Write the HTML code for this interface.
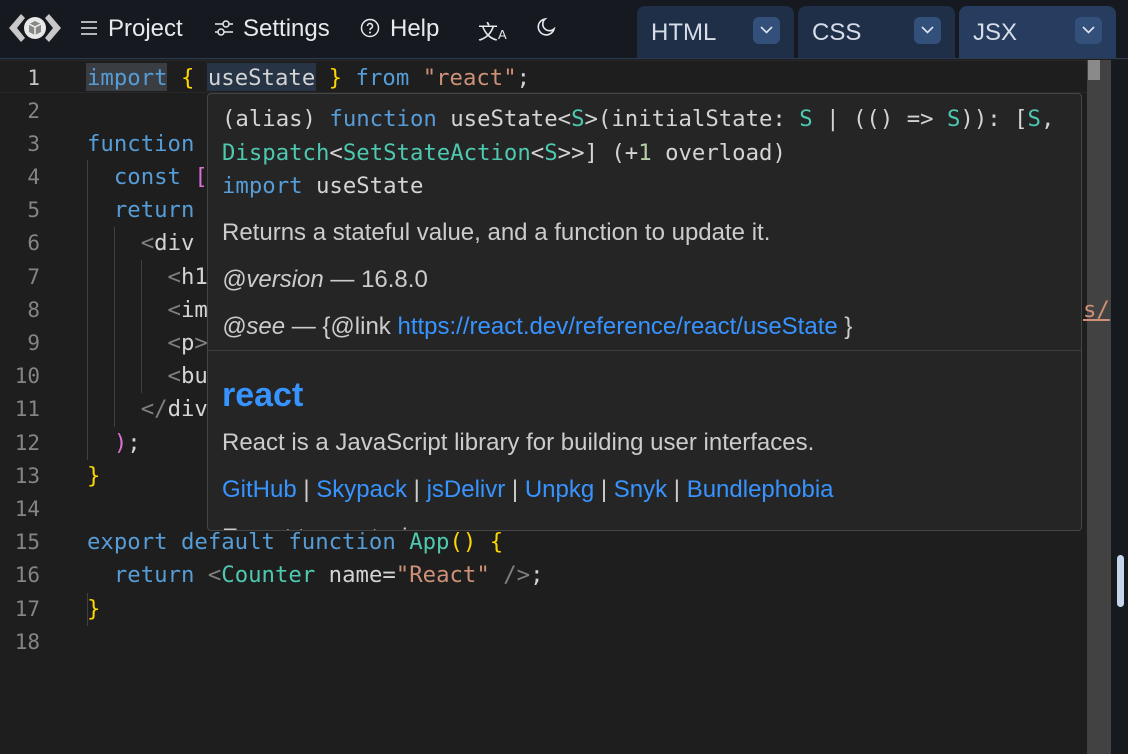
<!DOCTYPE html>
<html><head><meta charset="utf-8"><style>
*{margin:0;padding:0;box-sizing:border-box}
body{width:1128px;height:754px;overflow:hidden;background:#1e1e1e;font-family:"Liberation Sans",sans-serif;position:relative}
.hdr{position:absolute;left:0;top:0;width:1128px;height:59px;background:#161a20;border-bottom:1px solid #2a3b55}
.nav{position:absolute;top:15px;color:#e6e9ee;font-size:24px}
.tab{position:absolute;top:6px;height:52px;background:#1f2f47;border-radius:8px 8px 0 0;color:#d6dde8;font-size:24px;padding:13px 0 0 14px}
.tab.act{background:#263d5f}
.dd{position:absolute;right:14px;top:11px;width:27px;height:27px;background:#33507a;border-radius:6px}
.dd svg{position:absolute;left:7px;top:8px}
.ed{position:absolute;left:0;top:60px;width:1087px;height:694px;background:#1e1e1e}
.ln{position:absolute;left:0;width:40px;text-align:right;color:#858585;font-family:"DejaVu Sans Mono",monospace;font-size:21px}
.code{position:absolute;left:87px;white-space:pre;font-family:"DejaVu Sans Mono",monospace;font-size:22.3px;color:#d4d4d4}
.k{color:#569cd6}.s{color:#ce9178}.y{color:#ffd700}.p{color:#da70d6}.t{color:#4ec9b0}.g{color:#808080}.n{color:#b5cea8}
.guide{position:absolute;width:1px;background:#404040}
.tip{position:absolute;left:207px;top:93px;width:875px;height:438px;background:#252526;border:1px solid #454545;border-radius:4px;overflow:hidden}
.tc{position:absolute;left:14px;white-space:pre;font-family:"DejaVu Sans Mono",monospace;font-size:22.3px;color:#d4d4d4}
.tx{position:absolute;left:14px;white-space:nowrap;font-size:24px;color:#cccccc}
.a{color:#3794ff}
</style></head><body>
<div class="hdr">
 <svg style="position:absolute;left:7px;top:8px" width="56" height="40" viewBox="0 0 56 40"><path d="M2 20 L14 6 L18 10 L10 20 L18 30 L14 34Z M54 20 L42 6 L38 10 L46 20 L38 30 L42 34Z" fill="#c8c8c8"/><circle cx="28" cy="20" r="11" fill="#e8e8e8"/><path d="M22 16 L28 13 L34 16 L34 24 L28 27 L22 24Z" fill="#888"/><path d="M28 19 L28 27 M22 16 L28 19 L34 16" stroke="#eee" stroke-width="1.5" fill="none"/></svg>
 <svg style="position:absolute;left:79px;top:19px" width="20" height="18"><path d="M2 3H18M2 9H18M2 15H18" stroke="#e6e9ee" stroke-width="1.6"/></svg>
 <div class="nav" style="left:108px">Project</div>
 <svg style="position:absolute;left:213px;top:18px" width="22" height="20"><path d="M2 6H20M2 14H20" stroke="#e6e9ee" stroke-width="1.5"/><circle cx="13" cy="6" r="3" fill="#161a20" stroke="#e6e9ee" stroke-width="1.5"/><circle cx="8" cy="14" r="3" fill="#161a20" stroke="#e6e9ee" stroke-width="1.5"/></svg>
 <div class="nav" style="left:243px">Settings</div>
 <svg style="position:absolute;left:360px;top:18px" width="22" height="22"><circle cx="10" cy="10" r="8.5" stroke="#e6e9ee" stroke-width="1.5" fill="none"/><path d="M7.5 8a2.5 2.5 0 1 1 3.5 2.3c-.8.4-1 1-1 1.8" stroke="#e6e9ee" stroke-width="1.5" fill="none"/><circle cx="10" cy="14.5" r="1" fill="#e6e9ee"/></svg>
 <div class="nav" style="left:390px">Help</div>
 <div style="position:absolute;left:478px;top:16px;color:#e6e9ee;font-size:20px;font-family:'Noto Sans CJK SC',sans-serif">文<span style="font-size:13px;font-family:'Liberation Sans'">A</span></div>
 <svg style="position:absolute;left:535px;top:17px" width="22" height="22"><path d="M10 2a8 8 0 1 0 9 10a6.5 6.5 0 0 1-9-10z" stroke="#e6e9ee" stroke-width="1.6" fill="none"/></svg>
 <div class="tab" style="left:637px;width:157px">HTML<div class="dd"><svg width="13" height="10"><path d="M1 2L6.5 7.5L12 2" stroke="#dfe6f0" stroke-width="1.6" fill="none"/></svg></div></div>
 <div class="tab" style="left:798px;width:157px">CSS<div class="dd"><svg width="13" height="10"><path d="M1 2L6.5 7.5L12 2" stroke="#dfe6f0" stroke-width="1.6" fill="none"/></svg></div></div>
 <div class="tab act" style="left:959px;width:157px">JSX<div class="dd"><svg width="13" height="10"><path d="M1 2L6.5 7.5L12 2" stroke="#dfe6f0" stroke-width="1.6" fill="none"/></svg></div></div>
</div>
<div class="ed">
 <div style="position:absolute;left:0;top:0;width:1087px;height:33px;border-top:1px solid #282828;border-bottom:1px solid #282828"></div>
 <div style="position:absolute;left:86px;top:3px;width:81px;height:28px;background:#3a3d41"></div>
 <div style="position:absolute;left:207px;top:3px;width:109px;height:28px;background:#263445"></div>
 <div class="guide" style="left:87px;top:100px;height:300px"></div>
 <div class="guide" style="left:114px;top:167px;height:200px"></div>
 <div class="guide" style="left:141px;top:200px;height:133px"></div>
 <div class="guide" style="left:87px;top:533px;height:33px"></div>
</div>
<div style="position:absolute;left:1087px;top:60px;width:24px;height:694px;background:#424242"></div>
<div style="position:absolute;left:1088px;top:60px;width:12px;height:20px;background:#8a8a8a"></div>
<div style="position:absolute;left:1111px;top:60px;width:17px;height:694px;background:#161a1f"></div>
<div style="position:absolute;left:1117px;top:555px;width:7px;height:52px;background:#c5d5ec;border-radius:4px"></div>
<div class="ln" style="top:66px;color:#c6c6c6">1</div><div class="ln" style="top:99px">2</div><div class="ln" style="top:132px">3</div><div class="ln" style="top:165px">4</div><div class="ln" style="top:198px">5</div><div class="ln" style="top:231px">6</div><div class="ln" style="top:265px">7</div><div class="ln" style="top:298px">8</div><div class="ln" style="top:331px">9</div><div class="ln" style="top:364px">10</div><div class="ln" style="top:397px">11</div><div class="ln" style="top:431px">12</div><div class="ln" style="top:464px">13</div><div class="ln" style="top:497px">14</div><div class="ln" style="top:530px">15</div><div class="ln" style="top:563px">16</div><div class="ln" style="top:597px">17</div><div class="ln" style="top:630px">18</div>
<div class="code" style="top:65px"><span class="k">import</span> <span class="y">{</span> useState <span class="y">}</span> <span class="k">from</span> <span class="s">"react"</span>;</div>
<div class="code" style="top:131px"><span class="k">function</span></div>
<div class="code" style="top:164px">  <span class="k">const</span> <span class="p">[</span></div>
<div class="code" style="top:197px">  <span class="k">return</span></div>
<div class="code" style="top:230px">    <span class="g">&lt;</span>div</div>
<div class="code" style="top:264px">      <span class="g">&lt;</span>h1</div>
<div class="code" style="top:297px">      <span class="g">&lt;</span>im</div>
<div class="code" style="top:330px">      <span class="g">&lt;</span>p<span class="g">&gt;</span></div>
<div class="code" style="top:363px">      <span class="g">&lt;</span>bu</div>
<div class="code" style="top:396px">    <span class="g">&lt;/</span>div</div>
<div class="code" style="top:430px">  <span class="p">)</span>;</div>
<div class="code" style="top:463px"><span class="y">}</span></div>
<div class="code" style="top:529px"><span class="k">export default function</span> <span class="t">App</span><span class="y">()</span> <span class="y">{</span></div>
<div class="code" style="top:562px">  <span class="k">return</span> <span class="g">&lt;</span><span class="t">Counter</span> name=<span class="s">"React"</span> <span class="g">/&gt;</span>;</div>
<div class="code" style="top:596px"><span class="y">}</span></div>
<div class="code" style="left:1083px;top:297px;color:#ce9178;text-decoration:underline">s/</div>
<div class="tip">
 <div class="tc" style="top:12px">(alias) <span class="k">function</span> useState&lt;<span class="t">S</span>&gt;(initialState: <span class="t">S</span> | (() =&gt; <span class="t">S</span>)): [<span class="t">S</span>,</div>
 <div class="tc" style="top:46px"><span class="t">Dispatch</span>&lt;<span class="t">SetStateAction</span>&lt;<span class="t">S</span>&gt;&gt;] (+<span class="n">1</span> overload)</div>
 <div class="tc" style="top:79px"><span class="k">import</span> useState</div>
 <div class="tx" style="top:125px">Returns a stateful value, and a function to update it.</div>
 <div class="tx" style="top:172px"><i>@version</i> — 16.8.0</div>
 <div class="tx" style="top:219px"><i>@see</i> — {@link <span class="a">https://react.dev/reference/react/useState</span> }</div>
 <div style="position:absolute;left:0;top:256px;width:100%;height:1px;background:#3c3c3c"></div>
 <div class="tx" style="top:282px;font-size:34px;font-weight:bold;color:#3794ff">react</div>
 <div class="tx" style="top:335px">React is a JavaScript library for building user interfaces.</div>
 <div class="tx" style="top:382px"><span class="a">GitHub</span> | <span class="a">Skypack</span> | <span class="a">jsDelivr</span> | <span class="a">Unpkg</span> | <span class="a">Snyk</span> | <span class="a">Bundlephobia</span></div>
 <div class="tx" style="top:430px">Export to react.win</div>
</div>
</body></html>
